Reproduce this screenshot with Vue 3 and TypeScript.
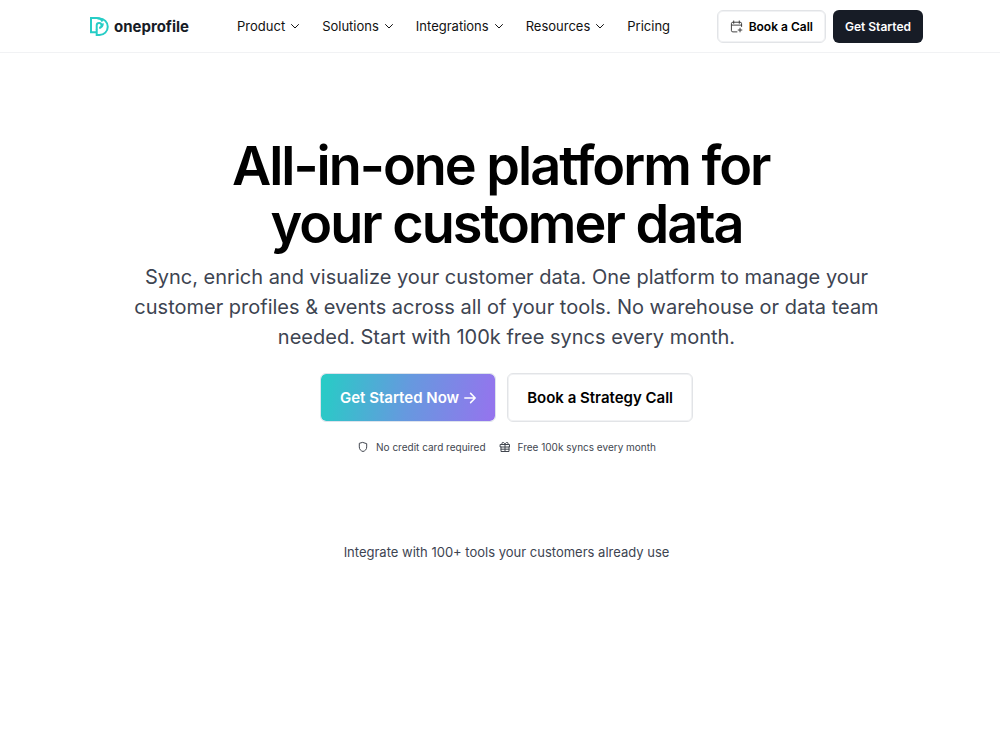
<script setup lang="ts">
interface NavItem {
  label: string
  menu: boolean
}

const navItems: NavItem[] = [
  { label: 'Product', menu: true },
  { label: 'Solutions', menu: true },
  { label: 'Integrations', menu: true },
  { label: 'Resources', menu: true },
  { label: 'Pricing', menu: false },
]
</script>

<template>
  <div class="page">
    <header class="header">
      <div class="bar">
        <a class="brand" href="#">
          <svg class="mark" viewBox="0 0 20 20" aria-hidden="true">
            <path d="M7.500 16.200H2V2h6a6 6 0 0 1 5.500 3.500" />
            <path d="M7.700 13v6H10.500a8 8 0 0 0 0-16.500H8.500" />
            <path d="M7.700 13.500V9.300a2.400 2.400 0 1 1 2.400 2.500c2.600 0 3.800-2.200 3.700-4.400" />
          </svg>
          <span>oneprofile</span>
        </a>
        <nav class="nav">
          <template v-for="item in navItems" :key="item.label">
            <button v-if="item.menu" class="nav-item" type="button">
              {{ item.label }}
              <svg class="chevron" viewBox="0 0 8 8" aria-hidden="true"><path d="M.5 2.500 4 6l3.500-3.500" /></svg>
            </button>
            <a v-else class="nav-item" href="#">{{ item.label }}</a>
          </template>
        </nav>
        <div class="actions">
          <a class="btn small light" href="#">
            <svg class="calendar" viewBox="0 0 14 14" aria-hidden="true">
              <path d="M4 1v2.600M10 1v2.600M2 5.500h10.500M12.500 7V4a1.600 1.600 0 0 0-1.600-1.600H3.100A1.600 1.600 0 0 0 1.500 4v7.200a1.600 1.600 0 0 0 1.600 1.600h4.400M10.800 8.800v4M8.800 10.800h4" />
            </svg>
            Book a Call
          </a>
          <a class="btn small dark" href="#">Get Started</a>
        </div>
      </div>
    </header>
    <main class="hero">
      <h1>All-in-one platform for&nbsp;<br />your customer data</h1>
      <p class="lead">
        Sync, enrich and visualize your customer data. One platform to manage your customer profiles &amp; events
        across all of your tools. No warehouse or data team needed. Start with 100k free syncs every month.
      </p>
      <div class="cta">
        <a class="btn large gradient" href="#">
          Get Started Now
          <svg class="arrow" viewBox="0 0 12 12" aria-hidden="true"><path d="M.8 6h10.400M6.600 1.400 11.200 6l-4.600 4.600" /></svg>
        </a>
        <a class="btn large light" href="#">Book a Strategy Call</a>
      </div>
      <ul class="perks">
        <li>
          <svg viewBox="0 0 12 12" aria-hidden="true"><path d="M6 1.500 9.700 2.700v3.200C9.700 8.500 8.200 9.800 6 10.500 3.800 9.800 2.300 8.500 2.300 5.900V2.700Z" /></svg>
          No credit card required
        </li>
        <li>
          <svg viewBox="0 0 12 12" aria-hidden="true"><path d="M1.500 3.500h9v2.500h-9ZM2 6v4.500h8V6M6 3.500v7M2 8.200h8M6 3.500C5.600 2 4.700 1.400 3.900 1.400 2.500 1.400 2.500 3.500 3.900 3.500M6 3.500C6.400 2 7.300 1.400 8.100 1.400c1.400 0 1.400 2.100 0 2.100" /></svg>
          Free 100k syncs every month
        </li>
      </ul>
      <p class="note">Integrate with 100+ tools your customers already use</p>
    </main>
  </div>
</template>

<style>
body {
  margin: 0;
  background: #fff;
}
</style>

<style scoped>
.page {
  font-family: Inter, "Liberation Sans", sans-serif;
  color: #000;
}
svg {
  fill: none;
  stroke: currentColor;
  stroke-linecap: round;
  stroke-linejoin: round;
  flex: none;
}
a {
  color: inherit;
  text-decoration: none;
}
.header {
  border-bottom: 1px solid #f1f2f4;
  padding: 0 77px 0 89px;
}
.bar {
  display: flex;
  align-items: center;
  height: 52px;
}
.brand {
  display: flex;
  align-items: center;
  gap: 5px;
  font-size: 15px;
  font-weight: 700;
  color: #171c26;
}
.mark {
  width: 20px;
  height: 20px;
  stroke: #27cdc6;
  stroke-width: 2;
  stroke-linecap: butt;
  stroke-linejoin: miter;
}
.nav {
  display: flex;
  align-items: center;
  gap: 23px;
  margin-left: 48px;
}
.nav-item {
  display: flex;
  align-items: center;
  gap: 6px;
  border: 0;
  padding: 0;
  background: none;
  font: inherit;
  font-size: 13px;
  line-height: 20px;
  color: #111;
}
.chevron {
  width: 8px;
  height: 8px;
}
.actions {
  display: flex;
  gap: 7px;
  margin-left: auto;
}
.btn {
  display: flex;
  align-items: center;
  justify-content: center;
  box-sizing: border-box;
  font-weight: 600;
  white-space: nowrap;
}
.small {
  height: 33px;
  padding: 0 12px;
  border-radius: 6px;
  font-size: 12px;
  gap: 6px;
}
.large {
  height: 49px;
  padding: 0 19px;
  border-radius: 6px;
  font-size: 15px;
  gap: 5px;
}
.light {
  border: 1px solid #e2e4e7;
  box-shadow: inset 0 0 0 1px #f1f2f4;
}
.dark {
  background: #171c26;
  color: #fff;
}
.gradient {
  border: 1px solid #dde3ec;
  background: linear-gradient(100deg, #26cdc5, #6699df 50%, #9673ee) padding-box;
  color: #fff;
}
.calendar {
  width: 13px;
  height: 13px;
  stroke: #333;
}
.arrow {
  width: 12px;
  height: 12px;
  stroke-width: 1.500;
}
.hero {
  display: flex;
  flex-direction: column;
  align-items: center;
  padding: 84px 120px 60px 133px;
  text-align: center;
}
h1 {
  margin: 0;
  font-size: 54px;
  line-height: 58px;
  font-weight: 600;
  letter-spacing: -2px;
}
.lead {
  max-width: 750px;
  margin: 9px 0 0;
  font-size: 20px;
  line-height: 30px;
  color: #3d4451;
}
.cta {
  display: flex;
  gap: 11px;
  margin-top: 21px;
}
.perks {
  display: flex;
  gap: 13px;
  margin: 17px 0 0;
  padding: 0;
  list-style: none;
  font-size: 10px;
  line-height: 16px;
  color: #41464f;
}
.perks li {
  display: flex;
  align-items: center;
  gap: 7px;
}
.perks svg {
  width: 12px;
  height: 12px;
}
.note {
  margin: 87px 0 0;
  font-size: 13px;
  line-height: 20px;
  color: #3d4451;
}
</style>
